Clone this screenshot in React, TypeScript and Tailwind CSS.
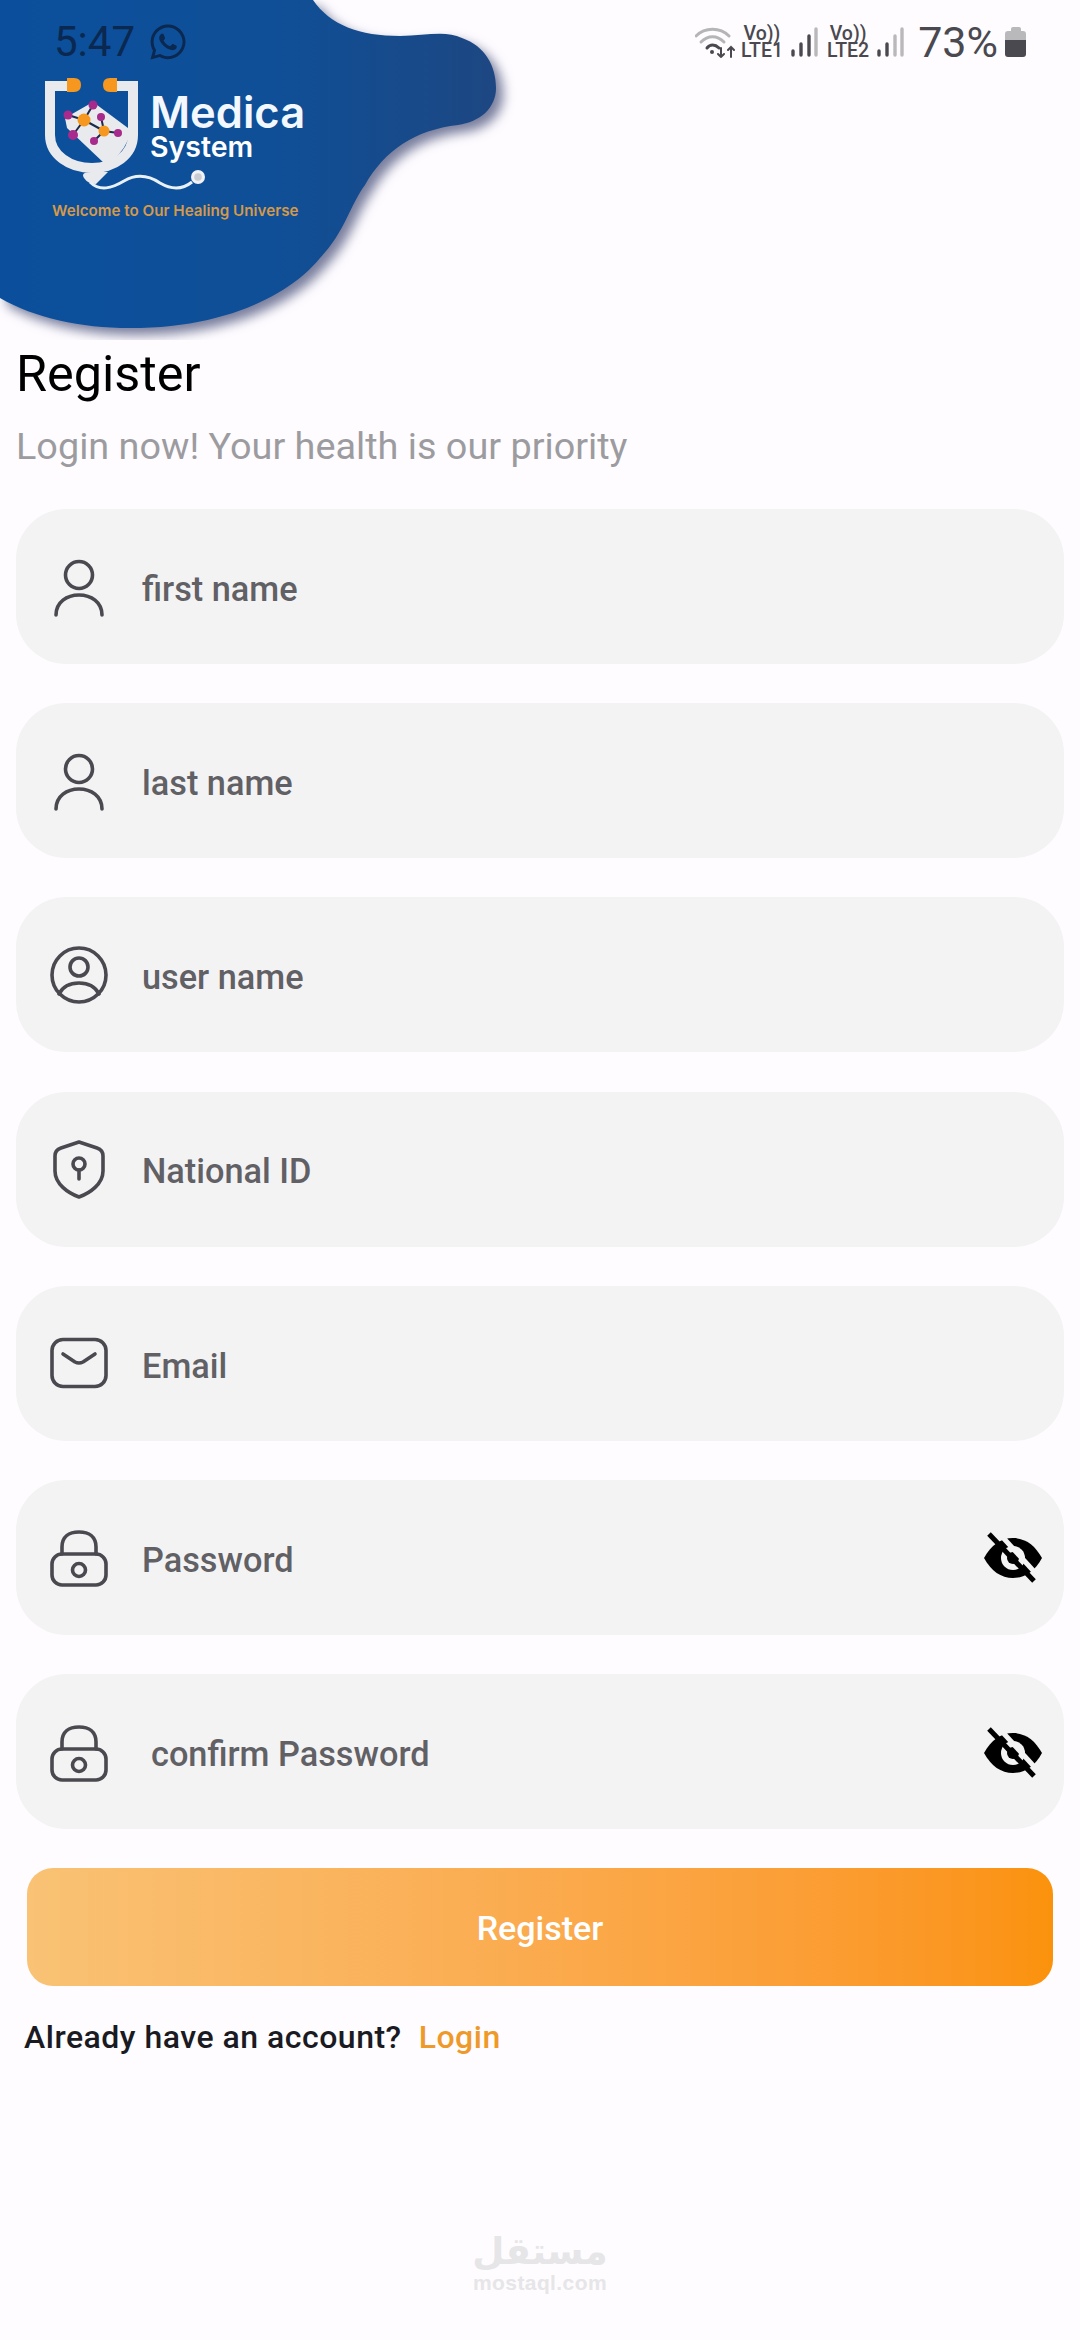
import React from 'react';
import { FaWhatsapp } from 'react-icons/fa';

const roboto = 'font-["Roboto",sans-serif]';

const PersonIcon = () => (
  <svg viewBox="0 0 60 60" className="h-[60px] w-[60px]" fill="none" stroke="#4a494f" strokeWidth="3.6" strokeLinecap="round">
    <circle cx="30" cy="18" r="13.5" />
    <path d="M7 58C7 45 18 38 30 38C42 38 53 45 53 58" />
  </svg>
);

const CircleUserIcon = () => (
  <svg viewBox="0 0 60 60" className="h-[60px] w-[60px]" fill="none" stroke="#4a494f" strokeWidth="3.6" strokeLinecap="round">
    <circle cx="30" cy="30" r="27" />
    <circle cx="30" cy="22" r="9" />
    <path d="M10 49C14 41 22 38 30 38C38 38 46 41 50 49" />
  </svg>
);

const ShieldIcon = () => (
  <svg viewBox="0 0 60 60" className="h-[60px] w-[60px]" fill="none" stroke="#4a494f" strokeWidth="3.6" strokeLinecap="round" strokeLinejoin="round">
    <path d="M30 3L48 9Q54 11 54 17V32C54 45 41 54 30 58C19 54 6 45 6 32V17Q6 11 12 9Z" />
    <circle cx="30" cy="25" r="6" />
    <path d="M30 31V40" />
  </svg>
);

const MailIcon = () => (
  <svg viewBox="0 0 60 60" className="h-[60px] w-[60px]" fill="none" stroke="#4a494f" strokeWidth="3.6" strokeLinecap="round" strokeLinejoin="round">
    <rect x="3" y="6.5" width="54" height="47" rx="11" />
    <path d="M14 21L26 29Q30 31 34 29L46 21" />
  </svg>
);

const LockIcon = () => (
  <svg viewBox="0 0 60 60" className="h-[60px] w-[60px]" fill="none" stroke="#4a494f" strokeWidth="3.6" strokeLinecap="round" strokeLinejoin="round">
    <rect x="3" y="27" width="54" height="31" rx="10" />
    <path d="M13 27V20C13 10 20 5 30 5C40 5 47 10 47 20V27" />
    <circle cx="30" cy="43" r="6.5" />
  </svg>
);

const EyeOff = () => (
  <svg viewBox="0 0 58 52" className="h-[52px] w-[58px]">
    <path d="M0 26C7 13 17 6 29 6C41 6 51 13 58 26C51 39 41 46 29 46C17 46 7 39 0 26Z" fill="#000" />
    <circle cx="29" cy="26" r="12" fill="#f4f3f4" />
    <circle cx="29" cy="26" r="6" fill="#000" />
    <path d="M9 0L54 49" stroke="#f4f3f4" strokeWidth="5" transform="translate(3 -2)" />
    <path d="M5 2L50 49" stroke="#000" strokeWidth="5" />
  </svg>
);

const Wifi = () => (
  <svg viewBox="0 0 42 32" className="h-[32px] w-[42px]" fill="none" strokeLinecap="round">
    <path d="M1 10C10 1 25 1 34 10" stroke="#b5b4b6" strokeWidth="3" />
    <path d="M6 16C13 9 22 9 29 16" stroke="#b5b4b6" strokeWidth="3" />
    <path d="M12 22C15 18 20 18 24 22" stroke="#4a494f" strokeWidth="3" />
    <circle cx="17" cy="26" r="2" fill="#4a494f" />
    <path d="M26 22V31M23 28L26 31L29 28M36 31V21M33 24L36 21L39 24" stroke="#4a494f" strokeWidth="2" />
  </svg>
);

const Bars = ({ active }: { active: number }) => (
  <svg viewBox="0 0 27 30" className="h-[30px] w-[27px]" strokeLinecap="round" strokeWidth="3.4">
    {[
      [2, 24],
      [10, 17],
      [18, 9],
      [25, 2],
    ].map(([x, y], i) => (
      <path key={x} d={`M${x} ${y}V28`} stroke={i < active ? '#4a494f' : '#b9b8ba'} />
    ))}
  </svg>
);

const Lte = ({ label }: { label: string }) => (
  <div className={`flex flex-col items-center ${roboto} text-[19.5px] leading-[17px] font-medium text-[#4a494f]`}>
    <span>Vo))</span>
    <span>{label}</span>
  </div>
);

const Battery = () => (
  <div className="flex flex-col items-center">
    <div className="h-[4px] w-[10px] rounded-t-[2px] bg-[#b9b8ba]" />
    <div className="h-[9px] w-[21px] rounded-t-[3px] bg-[#b9b8ba]" />
    <div className="h-[17px] w-[21px] rounded-b-[3px] bg-[#4a494f]" />
  </div>
);

const Logo = () => (
  <svg viewBox="40 74 170 126" className="h-[126px] w-[170px] shrink-0">
    <path d="M72 86H50V135C50 155 70 168 92 168C114 168 133 155 133 135V86H111" fill="none" stroke="#e8eaed" strokeWidth="10" />
    <path d="M65 118L93 102L128 128V140Q120 158 105 164L67 128Z" fill="#e8eaed" />
    <path d="M67 78H74Q81 78 81 85Q81 92 74 92H67ZM117 78H110Q103 78 103 85Q103 92 110 92H117Z" fill="#f6981f" />
    <path d="M92 172Q80 172 84 178Q88 184 96 184Q102 178 108 172Z" fill="#e8eaed" />
    <path d="M90 182C100 192 112 188 124 181C136 174 148 175 160 183C172 190 182 190 192 182" fill="none" stroke="#e8f1f8" strokeWidth="3" />
    <circle cx="198" cy="177" r="7" fill="#f0f2f4" />
    <circle cx="198" cy="177" r="3.8" fill="#c9ccd2" />
    <g stroke="#1c2b4a" strokeWidth="2">
      <path d="M68 115L84 120M93 105L84 120M73 135L84 120M84 120L104 131M101 117L104 131M94 141L104 131M118 133L104 131" />
    </g>
    <circle cx="84" cy="120" r="6.5" fill="#f6981f" />
    <circle cx="104" cy="131" r="5.5" fill="#f6981f" />
    <g fill="#a82a8c">
      <circle cx="68" cy="115" r="4.5" />
      <circle cx="93" cy="105" r="4.5" />
      <circle cx="73" cy="135" r="5" />
      <circle cx="101" cy="117" r="4" />
      <circle cx="94" cy="141" r="4" />
      <circle cx="118" cy="133" r="4" />
    </g>
  </svg>
);

const Field = ({ icon, label, indent, eye }: { icon: React.ReactNode; label: string; indent?: boolean; eye?: boolean }) => (
  <div className="flex h-[155px] items-center rounded-[50px] bg-[#f4f3f4] pr-[22px] pl-[33px]">
    {icon}
    <span className={`${indent ? 'ml-[42px]' : 'ml-[33px]'} flex-1 pt-[6px] ${roboto} text-[34.3px] font-medium text-[#616065]`}>
      {label}
    </span>
    {eye && <div className="pt-[2px]"><EyeOff /></div>}
  </div>
);

export default function App() {
  return (
    <div className="flex min-h-[2340px] flex-col bg-[#fefcff]">
      {/* Header blob, status bar and logo */}
      <header className="relative h-[346px]">
        <div className="absolute top-0 left-0 h-[340px] w-[540px] overflow-hidden">
          <svg viewBox="0 0 520 360" className="h-[360px] w-[520px] drop-shadow-[7px_7px_6px_rgba(30,40,90,0.6)]">
            <defs>
              <linearGradient id="blob" x1="0" x2="1" y1="0" y2="0">
                <stop offset="0" stopColor="#0b4f9c" />
                <stop offset="0.55" stopColor="#0f4f97" />
                <stop offset="1" stopColor="#1d4782" />
              </linearGradient>
            </defs>
            <path
              d="M0 0H313C330 25 360 36 400 36C425 36 445 30 462 38C485 46 496 66 496 88C496 108 480 122 458 125C415 130 385 150 365 185C350 205 345 232 320 258C290 295 225 328 130 328C80 328 35 318 0 298Z"
              fill="url(#blob)"
            />
          </svg>
        </div>
        <div className="relative flex items-center justify-between pt-[20px] pr-[54px] pl-[54px]">
          <div className="flex items-center gap-[13px]">
            <span className={`${roboto} text-[42px] leading-[44px] text-[#0a2850]`}>5:47</span>
            <FaWhatsapp className="h-[40px] w-[40px] text-[#0a2850]" />
          </div>
          <div className="flex items-center">
            <Wifi />
            <div className="ml-[4px]"><Lte label="LTE1" /></div>
            <div className="ml-[8px]"><Bars active={3} /></div>
            <div className="ml-[9px]"><Lte label="LTE2" /></div>
            <div className="ml-[8px]"><Bars active={2} /></div>
            <span className={`ml-[14px] ${roboto} text-[43px] leading-[44px] text-[#4a494f]`}>73%</span>
            <div className="ml-[7px]"><Battery /></div>
          </div>
        </div>
        <div className="relative mt-[10px] flex items-start pl-[40px]">
          <Logo />
          <div className='-ml-[60px] flex flex-col font-["Inter",sans-serif] text-white'>
            <span className="mt-[16px] text-[43.5px] leading-[44px] font-semibold text-[#f2f8fd]">Medica</span>
            <span className="-mt-[2px] text-[28.5px] leading-[30px] font-semibold">System</span>
          </div>
        </div>
        <p className='relative mt-[1px] pl-[52px] font-["Inter",sans-serif] text-[15.2px] leading-[20px] font-semibold text-[#d4994a]'>
          Welcome to Our Healing Universe
        </p>
      </header>

      <main className="flex flex-col px-[16px]">
        <h1 className={`${roboto} text-[50.4px] leading-[56px] text-black`}>Register</h1>
        <p className={`mt-[22px] ${roboto} text-[37.8px] leading-[44px] text-[#9c9ca0]`}>Login now! Your health is our priority</p>

        <div className="mt-[41px] flex flex-col gap-[39.2px]">
          <Field icon={<PersonIcon />} label="first name" />
          <Field icon={<PersonIcon />} label="last name" />
          <Field icon={<CircleUserIcon />} label="user name" />
          <Field icon={<ShieldIcon />} label="National ID" />
          <Field icon={<MailIcon />} label="Email" />
          <Field icon={<LockIcon />} label="Password" eye />
          <Field icon={<LockIcon />} label="confirm Password" indent eye />
        </div>

        <button className={`mx-[11px] mt-[39px] h-[118px] rounded-[26px] bg-gradient-to-r from-[#f9c274] to-[#fb920b] pt-[3px] ${roboto} text-[34px] font-medium text-white`}>
          Register
        </button>

        <div className={`mt-[31px] flex gap-[17px] pl-[8px] ${roboto} text-[32px] leading-[40px] font-medium tracking-[0.5px]`}>
          <span className="text-[#1a1a22]">Already have an account?</span>
          <span className="text-[#ee9a2a]">Login</span>
        </div>
      </main>

      {/* Watermark */}
      <footer className="mt-[176px] flex flex-col items-center text-[#e6e5e7]">
        <span dir="rtl" className='font-["DejaVu_Sans",sans-serif] text-[37px] leading-[38px] font-bold'>مستقل</span>
        <span className='font-["Liberation_Sans",sans-serif] text-[21px] leading-[24px] font-bold tracking-[0.4px]'>mostaql.com</span>
      </footer>
    </div>
  );
}
